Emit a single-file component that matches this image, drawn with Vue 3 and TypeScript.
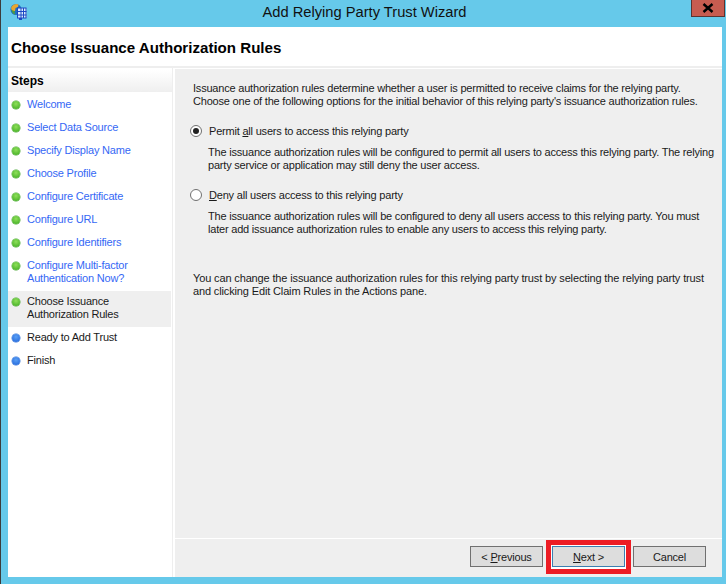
<script setup lang="ts">
interface Step { label: string[]; state: 'done' | 'current' | 'todo' }
const steps: Step[] = [
  { label: ['Welcome'], state: 'done' },
  { label: ['Select Data Source'], state: 'done' },
  { label: ['Specify Display Name'], state: 'done' },
  { label: ['Choose Profile'], state: 'done' },
  { label: ['Configure Certificate'], state: 'done' },
  { label: ['Configure URL'], state: 'done' },
  { label: ['Configure Identifiers'], state: 'done' },
  { label: ['Configure Multi-factor', 'Authentication Now?'], state: 'done' },
  { label: ['Choose Issuance', 'Authorization Rules'], state: 'current' },
  { label: ['Ready to Add Trust'], state: 'todo' },
  { label: ['Finish'], state: 'todo' },
]
</script>

<template>
  <div class="window">
    <header class="titlebar">
      <svg class="appicon" width="17" height="17" viewBox="0 0 17 17">
        <circle cx="6" cy="6.500" r="5.500" fill="#1f6fc0" />
        <path d="M2 3 Q5 0 8.500 1.500 L8 4 L5.500 5 L5 8 L2.500 8 Q0 5.500 2 3Z" fill="#e9a62f" />
        <path d="M1.500 7 L4.500 8 L5 11.500 Q2.500 11 1.500 7Z" fill="#4f9e3a" />
        <path d="M7 5h9.500v10H7z" fill="#dcecfb" />
        <path d="M7 5h9.500M7 8.500h9.500M7 12h9.500M7 15h9.500M7.500 5v10M11 5v10M13.500 5v10M16 5v10" stroke="#1c48c4" stroke-width="1" fill="none" />
        <path d="M9 15h3v2H9z" fill="#1c48c4" />
      </svg>
      <span class="wintitle">Add Relying Party Trust Wizard</span>
      <div class="close">
        <svg width="12" height="10" viewBox="0 0 12 10"><path d="M1.500 1 L10.500 9 M10.500 1 L1.500 9" stroke="#000" stroke-width="2.400" /></svg>
      </div>
    </header>
    <div class="client">
      <div class="pagehead"><h1>Choose Issuance Authorization Rules</h1></div>
      <div class="body">
        <aside class="sidebar">
          <div class="stepshead">Steps</div>
          <ul class="steps">
            <li v-for="s in steps" :key="s.label[0]" class="step" :class="s.state">
              <span class="dot"></span>
              <span class="lines"><span v-for="l in s.label" :key="l" class="line">{{ l }}</span></span>
            </li>
          </ul>
        </aside>
        <main class="main">
          <div class="content">
            <p class="intro">Issuance authorization rules determine whether a user is permitted to receive claims for the relying party.<br />Choose one of the following options for the initial behavior of this relying party's issuance authorization rules.</p>
            <div class="option first">
              <span class="radio checked"></span>
              <span>Permit <u>a</u>ll users to access this relying party</span>
            </div>
            <p class="desc">The issuance authorization rules will be configured to permit all users to access this relying party. The relying<br />party service or application may still deny the user access.</p>
            <div class="option second">
              <span class="radio"></span>
              <span><u>D</u>eny all users access to this relying party</span>
            </div>
            <p class="desc">The issuance authorization rules will be configured to deny all users access to this relying party. You must<br />later add issuance authorization rules to enable any users to access this relying party.</p>
            <p class="note">You can change the issuance authorization rules for this relying party trust by selecting the relying party trust<br />and clicking Edit Claim Rules in the Actions pane.</p>
          </div>
          <footer class="buttons">
            <button class="btn outer">&lt; <u>P</u>revious</button>
            <span class="highlight"><button class="btn default"><u>N</u>ext &gt;</button></span>
            <button class="btn outer">Cancel</button>
          </footer>
        </main>
      </div>
    </div>
  </div>
</template>

<style>
html, body { margin: 0; padding: 0; background: #66c9ea; }
</style>

<style scoped>
.window {
  width: 726px;
  height: 584px;
  box-sizing: border-box;
  background: #66c9ea;
  border-left: 1px solid #3c3c3c;
  display: flex;
  flex-direction: column;
  font-family: "Liberation Sans", Arial, sans-serif;
  font-size: 11px;
  letter-spacing: -0.2px;
  color: #1a1a1a;
  overflow: hidden;
}
.titlebar {
  height: 27px;
  flex: none;
  position: relative;
  display: flex;
  justify-content: center;
  align-items: center;
}
.appicon { position: absolute; left: 9px; top: 3px; }
.wintitle { font-size: 14.700px; color: #111; padding: 0 0 4px 2px; letter-spacing: 0; }
.close {
  position: absolute;
  right: 1px;
  top: 0;
  width: 34px;
  height: 17px;
  box-sizing: border-box;
  background: #c75c50;
  border: 1px solid #5c3330;
  border-top: 0;
  display: flex;
  align-items: center;
  justify-content: center;
}
.close svg { margin-bottom: 1px; }
.client {
  flex: 1;
  margin: 0 4px 7px 7px;
  background: #fff;
  display: flex;
  flex-direction: column;
  min-height: 0;
}
.pagehead {
  height: 39px;
  flex: none;
  border-bottom: 2px solid #eeeeee;
  display: flex;
  align-items: center;
  padding-left: 3px;
}
h1 { margin: 2px 0 0; font-size: 15.100px; line-height: 20px; font-weight: 700; color: #000; letter-spacing: 0; }
.body { flex: 1; display: flex; min-height: 0; }
.sidebar { width: 164px; flex: none; border-right: 1px solid #eeeeee; }
.stepshead {
  height: 22px;
  margin-top: 2px;
  box-sizing: border-box;
  padding: 4px 0 0 3px;
  font-weight: 700;
  font-size: 12px;
  letter-spacing: 0;
  color: #000;
  background: linear-gradient(#ffffff, #efefef);
}
.steps { list-style: none; margin: 2px 0 0; padding: 0; }
.step {
  display: flex;
  align-items: flex-start;
  padding: 4px 0 6px 4px;
  color: #3568f5;
}
.step.current { background: #efefef; color: #1a1a1a; margin-right: 1px; }
.step.todo { color: #1a1a1a; }
.lines { display: flex; flex-direction: column; margin-left: 7px; line-height: 13px; }
.line { white-space: nowrap; }
.dot {
  width: 8px;
  height: 8px;
  margin-top: 3px;
  border-radius: 50%;
  flex: none;
  background: radial-gradient(circle at 50% 35%, #8fe05a, #3aa81e);
  box-shadow: 0 0 0 0.500px #4fa83a;
}
.todo .dot {
  background: radial-gradient(circle at 50% 35%, #5aa0f5, #1e62d8);
  box-shadow: 0 0 0 0.500px #3a78d8;
}
.main {
  flex: 1;
  margin: 1px 0 0 2px;
  background: #efefef;
  display: flex;
  flex-direction: column;
  min-width: 0;
}
.content { flex: 1; padding: 13px 0 0 18px; line-height: 13px; }
p { margin: 0; white-space: nowrap; }
.option { display: flex; align-items: center; gap: 7px; margin-left: -3px; color: #1a1a1a; height: 14px; }
.option.first { margin-top: 16px; }
.option.second { margin-top: 16px; }
.radio {
  width: 10px;
  height: 10px;
  border: 1px solid #707070;
  border-radius: 50%;
  background: #fff;
  flex: none;
  position: relative;
}
.radio.checked::after {
  content: "";
  position: absolute;
  left: 2px;
  top: 2px;
  width: 6px;
  height: 6px;
  border-radius: 50%;
  background: #222;
}
.desc { margin: 8px 0 0 15px; }
.note { margin-top: 36px; letter-spacing: -0.14px; }
.buttons {
  height: 37px;
  flex: none;
  border-top: 1px solid #fff;
  display: flex;
  align-items: flex-start;
  justify-content: flex-end;
  padding: 1px 16px 0 0;
  box-sizing: content-box;
}
.btn {
  width: 73px;
  height: 21px;
  box-sizing: border-box;
  border: 1px solid #707070;
  background: #dddddd;
  font-family: inherit;
  font-size: 11px;
  letter-spacing: inherit;
  color: #1a1a1a;
  padding: 0;
}
.btn.outer { margin-top: 6px; }
.btn.default { border-color: #3c7fb1; display: block; }
.highlight {
  border: 5px solid #ed1c24;
  padding: 1px 1px 2px;
  margin: 0 2px 0 3px;
  display: flex;
  background: #fff;
}
</style>
